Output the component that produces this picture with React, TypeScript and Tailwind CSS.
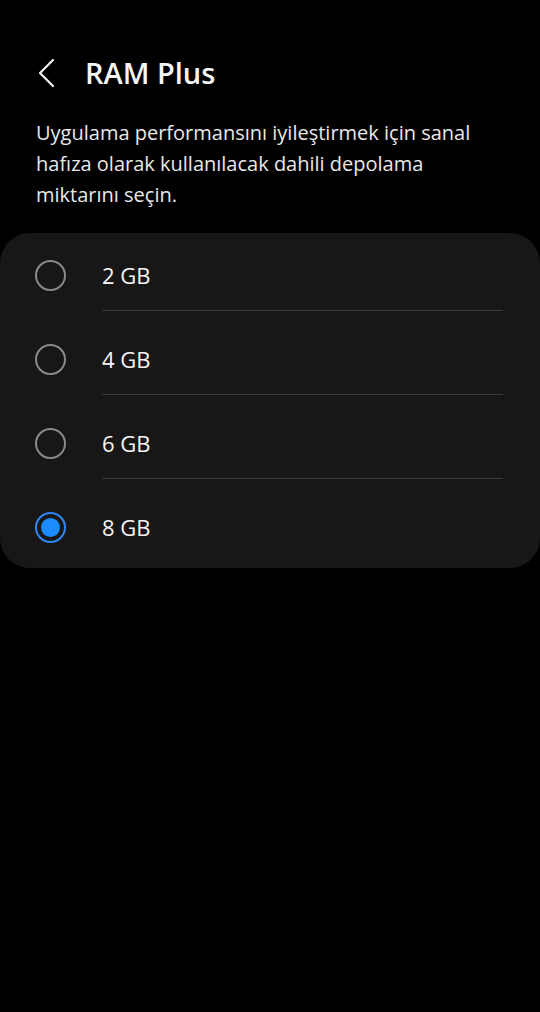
import React from "react";

const options = ["2 GB", "4 GB", "6 GB", "8 GB"];

export default function App() {
  const selected = 3;
  return (
    <div
      className="w-[540px] h-[1012px] bg-black text-white overflow-hidden"
      style={{ fontFamily: "'Open Sans', 'Noto Sans', sans-serif" }}
    >
      <div className="flex items-center h-[60px] mt-[43px] pl-[36px]">
        <svg width="22" height="30" viewBox="0 0 22 30" className="mr-[27px]">
          <path d="M17 2 L4 15 L17 28" fill="none" stroke="#f2f2f2" strokeWidth="2.2" strokeLinecap="round" strokeLinejoin="round" />
        </svg>
        <h1 className="text-[29px] font-semibold tracking-[0px] text-[#f5f5f5]">RAM Plus</h1>
      </div>
      <p className="ml-[36px] w-[450px] mt-[14px] text-[20px] leading-[31px] tracking-[0px] text-[#e8e8e8]">
        Uygulama performansını iyileştirmek için sanal hafıza olarak kullanılacak dahili depolama miktarını seçin.
      </p>
      <div className="mt-[23px] bg-[#171717] rounded-[30px] pt-[14px] pb-[13px]">
        {options.map((o, i) => (
          <div key={o}>
            <div className="flex h-[56px] items-center">
              <div className="w-[102px] flex items-center justify-center pr-[2px]">
                {i === selected ? (
                  <div className="w-[31px] h-[31px] rounded-full border-2 border-[#2f86f7] flex items-center justify-center">
                    <div className="w-[19px] h-[19px] rounded-full bg-[#1a8cff]" />
                  </div>
                ) : (
                  <div className="w-[31px] h-[31px] rounded-full border-2 border-[#8a8a8a]" />
                )}
              </div>
              <span className="text-[22px] text-[#f5f5f5] mt-[1px]">{o}</span>
            </div>
            {i < options.length - 1 && (
              <div className="ml-[102px] mr-[37px] mt-[7px] mb-[20px] h-px bg-[#3a3a3a]" />
            )}
          </div>
        ))}
      </div>
    </div>
  );
}
